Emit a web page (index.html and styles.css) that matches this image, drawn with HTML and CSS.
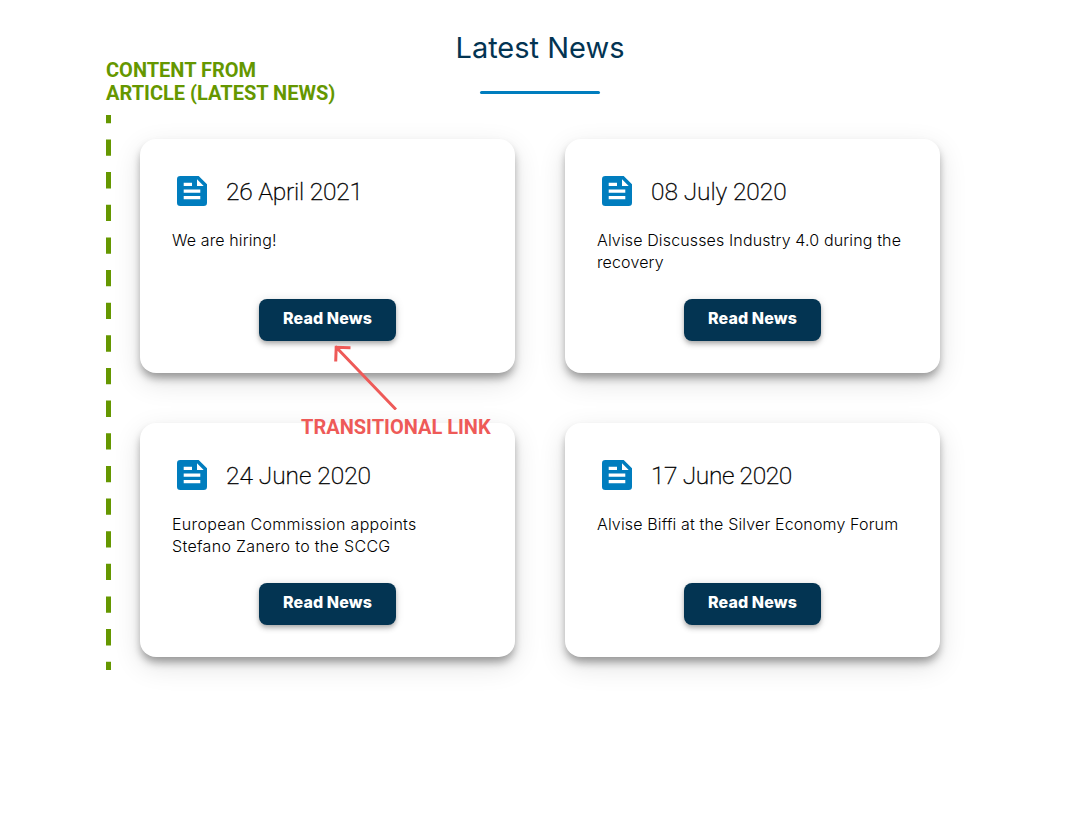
FILE: index.html
```html
<!DOCTYPE html>
<html lang="en">
<head>
<meta charset="utf-8">
<title>Latest News</title>
<link rel="stylesheet" href="styles.css">
</head>
<body>
<svg class="sprite" aria-hidden="true">
  <symbol id="article" viewBox="0 0 30 30">
    <path fill-rule="evenodd" d="M3.3 0H21.7L30 8.3V26.7A3.3 3.3 0 0 1 26.7 30H3.3A3.3 3.3 0 0 1 0 26.7V3.3A3.3 3.3 0 0 1 3.3 0ZM6.7 6.7V10H15V6.7ZM6.7 13.4V16.7H23.3V13.4ZM6.7 20V23.3H23.3V20ZM20 3.3V10H26.7Z"/>
  </symbol>
</svg>
<main class="page">
  <header class="heading">
    <h1 class="title">Latest News</h1>
    <div class="rule"></div>
  </header>
  <section class="cards">
    <article class="card">
      <div class="card-head"><svg class="icon"><use href="#article"/></svg><h2 class="date d1">26 April 2021</h2></div>
      <p class="text t1">We are hiring!</p>
      <a class="button">Read News</a>
    </article>
    <article class="card">
      <div class="card-head"><svg class="icon"><use href="#article"/></svg><h2 class="date d2">08 July 2020</h2></div>
      <p class="text t2">Alvise Discusses Industry 4.0 during the<br>recovery</p>
      <a class="button">Read News</a>
    </article>
    <article class="card">
      <div class="card-head"><svg class="icon"><use href="#article"/></svg><h2 class="date d3">24 June 2020</h2></div>
      <p class="text t3">European Commission appoints<br>Stefano Zanero to the SCCG</p>
      <a class="button">Read News</a>
    </article>
    <article class="card">
      <div class="card-head"><svg class="icon"><use href="#article"/></svg><h2 class="date d4">17 June 2020</h2></div>
      <p class="text t4">Alvise Biffi at the Silver Economy Forum</p>
      <a class="button">Read News</a>
    </article>
  </section>
  <div class="note note-green">CONTENT FROM<br>ARTICLE (LATEST NEWS)</div>
  <svg class="dashes" viewBox="0 0 5 555"><path d="M2.5 0V555"/></svg>
  <svg class="arrow" viewBox="0 0 66 68"><path d="M4.5 4.5L65 67.5M4.7 19.5L5.2 5.2L19.5 5.7"/></svg>
  <div class="note note-red">TRANSITIONAL LINK</div>
</main>
</body>
</html>
```

FILE: styles.css
```css
* { box-sizing: border-box; }
body { margin: 0; background: #fff; font-family: Roboto, "Liberation Sans", sans-serif; }
.sprite { display: none; }
.page { position: relative; height: 837px; overflow: hidden; padding-top: 30px; }
.heading { display: flex; flex-direction: column; align-items: center; }
.title { margin: 0; height: 61px; font: 400 29px/36px Inter, sans-serif; letter-spacing: 0; color: #033452; white-space: nowrap; }
.rule { width: 120px; height: 3px; border-radius: 2px; background: #007dbe; }
.cards { display: grid; grid-template-columns: 375px 375px; gap: 50px; justify-content: center; margin-top: 45px; }
.card { display: flex; flex-direction: column; align-items: flex-start; height: 234px; padding: 32px; border-radius: 16px; background: #fff; box-shadow: 0 6px 8px -1px rgba(0,0,0,.36), 0 9px 28px rgba(0,0,0,.12); }
.card-head { display: flex; align-items: center; gap: 19px; height: 40px; padding-left: 5px; }
.icon { width: 30px; height: 30px; fill: #007dbe; }
.date { margin: 0; padding-top: 2px; font-size: 24.5px; font-weight: 200; line-height: 40px; color: #000; -webkit-text-stroke: .3px #000; white-space: nowrap; }
.d1 { letter-spacing: -.24px; }
.d2 { letter-spacing: -.08px; }
.d3 { letter-spacing: -.04px; }
.d4 { letter-spacing: -.38px; }
.text { margin: 18px 0 0; height: 70px; font: 300 16px/22px Inter, sans-serif; color: #000; white-space: nowrap; }
.t1 { letter-spacing: .12px; }
.t2 { letter-spacing: .14px; }
.t3 { letter-spacing: .32px; }
.t4 { letter-spacing: .15px; }
.button { display: flex; align-items: center; justify-content: center; align-self: center; width: 137px; height: 42px; padding-bottom: 4px; border-radius: 8px; background: #033452; color: #fff; font: 800 16px/22px Inter, sans-serif; letter-spacing: .1px; box-shadow: 0 2px 4px -1px rgba(0,0,0,.2), 0 4px 5px rgba(0,0,0,.14), 0 1px 10px rgba(0,0,0,.12); }
.note { position: absolute; font-size: 20px; font-weight: 700; line-height: 23px; white-space: nowrap; }
.note-green { left: 106px; top: 59px; color: #659700; }
.note-red { left: 301px; top: 416px; color: #ee5a58; }
.dashes { position: absolute; left: 106px; top: 115px; width: 5px; height: 555px; }
.dashes path { stroke: #659700; stroke-width: 5; stroke-dasharray: 16.32 16.32; stroke-dashoffset: 8.16; }
.arrow { position: absolute; left: 331px; top: 342px; width: 66px; height: 68px; }
.arrow path { fill: none; stroke: #ee5a58; stroke-width: 3; }
```
